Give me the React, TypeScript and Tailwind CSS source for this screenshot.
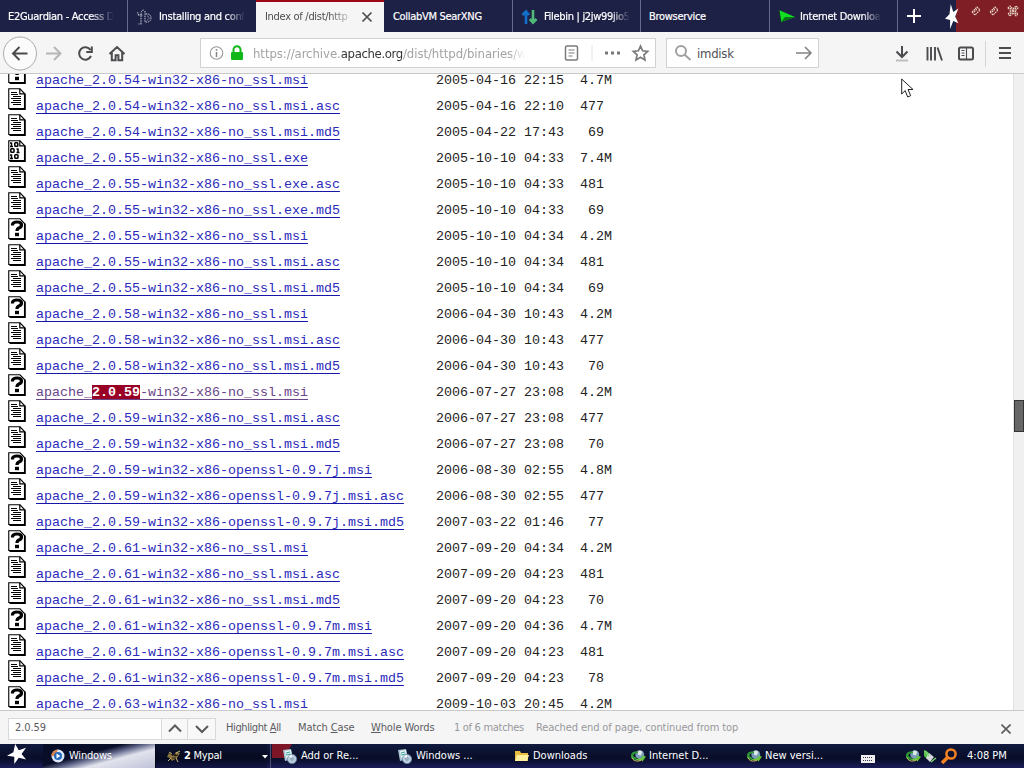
import type { ReactNode } from "react";

type Kind = "text" | "binary" | "unknown";

const FILES: { kind: Kind; name: string; date: string; size: string }[] = [
  { kind: "unknown", name: "apache_2.0.54-win32-x86-no_ssl.msi", date: "2005-04-16 22:15", size: "4.7M" },
  { kind: "text", name: "apache_2.0.54-win32-x86-no_ssl.msi.asc", date: "2005-04-16 22:10", size: "477" },
  { kind: "text", name: "apache_2.0.54-win32-x86-no_ssl.msi.md5", date: "2005-04-22 17:43", size: " 69" },
  { kind: "binary", name: "apache_2.0.55-win32-x86-no_ssl.exe", date: "2005-10-10 04:33", size: "7.4M" },
  { kind: "text", name: "apache_2.0.55-win32-x86-no_ssl.exe.asc", date: "2005-10-10 04:33", size: "481" },
  { kind: "text", name: "apache_2.0.55-win32-x86-no_ssl.exe.md5", date: "2005-10-10 04:33", size: " 69" },
  { kind: "unknown", name: "apache_2.0.55-win32-x86-no_ssl.msi", date: "2005-10-10 04:34", size: "4.2M" },
  { kind: "text", name: "apache_2.0.55-win32-x86-no_ssl.msi.asc", date: "2005-10-10 04:34", size: "481" },
  { kind: "text", name: "apache_2.0.55-win32-x86-no_ssl.msi.md5", date: "2005-10-10 04:34", size: " 69" },
  { kind: "unknown", name: "apache_2.0.58-win32-x86-no_ssl.msi", date: "2006-04-30 10:43", size: "4.2M" },
  { kind: "text", name: "apache_2.0.58-win32-x86-no_ssl.msi.asc", date: "2006-04-30 10:43", size: "477" },
  { kind: "text", name: "apache_2.0.58-win32-x86-no_ssl.msi.md5", date: "2006-04-30 10:43", size: " 70" },
  { kind: "unknown", name: "apache_2.0.59-win32-x86-no_ssl.msi", date: "2006-07-27 23:08", size: "4.2M" },
  { kind: "text", name: "apache_2.0.59-win32-x86-no_ssl.msi.asc", date: "2006-07-27 23:08", size: "477" },
  { kind: "text", name: "apache_2.0.59-win32-x86-no_ssl.msi.md5", date: "2006-07-27 23:08", size: " 70" },
  { kind: "unknown", name: "apache_2.0.59-win32-x86-openssl-0.9.7j.msi", date: "2006-08-30 02:55", size: "4.8M" },
  { kind: "text", name: "apache_2.0.59-win32-x86-openssl-0.9.7j.msi.asc", date: "2006-08-30 02:55", size: "477" },
  { kind: "text", name: "apache_2.0.59-win32-x86-openssl-0.9.7j.msi.md5", date: "2007-03-22 01:46", size: " 77" },
  { kind: "unknown", name: "apache_2.0.61-win32-x86-no_ssl.msi", date: "2007-09-20 04:34", size: "4.2M" },
  { kind: "text", name: "apache_2.0.61-win32-x86-no_ssl.msi.asc", date: "2007-09-20 04:23", size: "481" },
  { kind: "text", name: "apache_2.0.61-win32-x86-no_ssl.msi.md5", date: "2007-09-20 04:23", size: " 70" },
  { kind: "unknown", name: "apache_2.0.61-win32-x86-openssl-0.9.7m.msi", date: "2007-09-20 04:36", size: "4.7M" },
  { kind: "text", name: "apache_2.0.61-win32-x86-openssl-0.9.7m.msi.asc", date: "2007-09-20 04:23", size: "481" },
  { kind: "text", name: "apache_2.0.61-win32-x86-openssl-0.9.7m.msi.md5", date: "2007-09-20 04:23", size: " 78" },
  { kind: "unknown", name: "apache_2.0.63-win32-x86-no_ssl.msi", date: "2009-10-03 20:45", size: "4.2M" },
];

// index of the row that holds the current find match
const MATCH_ROW = 12;

function FileIcon({ kind }: { kind: Kind }) {
  return (
    <svg width="18" height="22" viewBox="0 0 18 22" className="shrink-0">
      <path d="M.75 .75H12L16.5 5.5V20.5H.75Z" fill="#fff" stroke="#000" strokeWidth="1.1" />
      <path d="M17 5.5V21.2H1.5" fill="none" stroke="#000" strokeWidth="1.6" />
      {kind !== "unknown" && <path d="M11.8 .8V5.8H16.5" fill="none" stroke="#000" strokeWidth="1.2" />}
      {kind === "text" && (
        <path
          d="M3 4.5h6M3 6.5h7M5 8.5h8M3 10.5h10M5 12.5h8M3 14.5h10M5 16.5h8"
          stroke="#000"
          shapeRendering="crispEdges"
        />
      )}
      {kind === "binary" && (
        <g fill="none" stroke="#000" strokeWidth="1.5">
          <path d="M3.5 2.500v4M2 3H3.500M2 6.500h3M10 8.500v4M8.500 9H10M8.500 12.500h3M3.500 14.500v4M2 15H3.500M2 18.500h3" />
          <rect x="6.800" y="2.800" width="3" height="3.500" rx=".8" />
          <rect x="2.800" y="8.800" width="3.200" height="3.500" rx=".8" />
          <rect x="6.800" y="14.800" width="3.200" height="3.500" rx=".8" />
        </g>
      )}
      {kind === "unknown" && (
        <>
          <path d="M4.500 7.500V6.300Q5 4 9 4Q13.500 4 13.500 7Q13.500 9 11 10Q9 10.800 9 13" fill="none" stroke="#000" strokeWidth="3.200" />
          <path d="M7 14.800h4v3.400H7z" />
        </>
      )}
    </svg>
  );
}

function Tab({ title, icon, fade, className }: { title: string; icon?: ReactNode; fade?: boolean; className: string }) {
  return (
    <div className={`flex h-8 shrink-0 items-center border-r border-[#656a88] pt-0.5 text-white ${className}`}>
      {icon}
      <span className={fade ? "whitespace-nowrap [mask-image:linear-gradient(to_right,#000_78%,transparent)]" : "whitespace-nowrap"}>
        {title}
      </span>
    </div>
  );
}

function Star({ className }: { className: string }) {
  return (
    <svg viewBox="0 0 22 22" preserveAspectRatio="none" className={className} fill="#fff">
      <path d="M9 0L13 7L21 4L16 11L21 17L13 15L8 22L8 14L0 13L7 9Z" />
    </svg>
  );
}

function IdmIcon() {
  return (
    <svg width="16" height="15" viewBox="0 0 18 16" className="shrink-0">
      <circle cx="11" cy="6" r="5" fill="#7b9bbd" />
      <path d="M9 2q3-2 5 1l-2 4-3-1z" fill="#dce9e2" />
      <path d="M9 2Q1 2 1 7q0 5 7 5l-1-3q-4-1-3-3 1-2 5-2z" fill="#2d9736" />
      <path d="M7 11l7-2-1-2 5 1-4 6-1-2q-3 1-6 0z" fill="#65c33c" />
      <path d="M2 9q2 5 8 4l3-1" fill="none" stroke="#e6d869" />
    </svg>
  );
}

function InstallerIcon() {
  return (
    <svg width="16" height="16" viewBox="0 0 16 16" className="shrink-0">
      <path d="M1 2l8-1 2 10-8 2z" fill="#a8c5d1" />
      <path d="M3 3l6-1 1 7-6 1z" fill="#e7f2f4" />
      <path d="M4 5l4-1M4 7l5-1" stroke="#3ca49b" />
      <circle cx="10" cy="11" r="4.6" fill="#b9ccdd" stroke="#7291ae" strokeWidth=".7" />
      <path d="M10 11l-3-3 3-1z" fill="#fff" />
      <circle cx="10" cy="11" r="1.2" fill="#fff" stroke="#6886a0" />
    </svg>
  );
}

function TabStrip() {
  return (
    <div className="flex h-8 bg-[#1d2146] text-[11px] tracking-[-0.3px] [-webkit-text-stroke:0.2px]">
      <Tab title="E2Guardian - Access D" fade className="w-32 pl-2" />
      <Tab
        title="Installing and conf"
        fade
        className="w-32 gap-1.5 border-r-0 pl-2"
        icon={
          <svg width="17" height="18" viewBox="0 0 17 18" className="shrink-0" fill="none" stroke="#c9cad5" strokeDasharray="1.5 .8">
            <path d="M5 16V6q0-4 3-4M2 7h5M2 4q-1 2 1 3" />
            <path d="M9 3v11h3q3-1 3-4t-3-4H9" />
            <path d="M11 8q2 0 2 2t-2 2M2 16h4" stroke="#8e91a8" />
          </svg>
        }
      />
      <div className="flex h-8 w-32 shrink-0 items-center border-t-2 border-[#9d0716] bg-[#f5f5f6] pl-[9px] text-[#4d4d50] [-webkit-text-stroke:0px]">
        <span className="w-[91px] whitespace-nowrap [mask-image:linear-gradient(to_right,#000_70%,transparent)]">Index of /dist/http</span>
        <svg width="22" height="12" viewBox="0 0 22 12" stroke="#4e4e50" strokeWidth="1.7">
          <path d="M6.5 1.5l9 9m0-9l-9 9" />
        </svg>
      </div>
      <Tab title="CollabVM SearXNG" className="w-[129px] pl-[9px]" />
      <Tab
        title="Filebin | j2jw99jio5"
        fade
        className="w-32 gap-1.5 pl-2"
        icon={
          <svg width="17" height="16" viewBox="0 0 17 16" className="shrink-0" fill="none" strokeWidth="2.6">
            <path d="M5 15V3M1.5 6L5 2.5L8 6" stroke="#126fca" />
            <path d="M12 1v12M8.800 10L12 13.500L15.500 10" stroke="#50b878" />
          </svg>
        }
      />
      <Tab title="Browservice" className="w-[129px] pl-2" />
      <Tab
        title="Internet Downloa"
        fade
        className="w-32 gap-1 pl-2"
        icon={
          <svg width="18" height="16" viewBox="0 0 18 16" className="shrink-0">
            <path d="M1 1L17 8L3 13Z" fill="#12df21" />
            <path d="M3 13L17 8L7 8Z" fill="#086f16" />
            <path d="M1 1l2 13" stroke="#153725" />
          </svg>
        }
      />
      <div className="flex flex-1 items-center bg-linear-to-r from-[#1d2146] from-44% to-[#801e25] to-44% pl-[9px]">
        <svg width="14" height="14" viewBox="0 0 14 14" stroke="#fff" strokeWidth="2" className="shrink-0">
          <path d="M7 0v14M0 7h14" />
        </svg>
        <Star className="ml-6 h-[25px] w-[14px] shrink-0" />
        <svg width="60" height="14" viewBox="0 0 60 14" className="mb-2.5 ml-2.5 shrink-0" fill="none" stroke="#e8d9ca" strokeWidth="1.1" strokeDasharray="1.6 .7">
          <path d="M3 8l5-5 3 3-5 5zM5 8l3-3M21 8l5-5 3 3-5 5zM23 8l3-3" />
          <path d="M39 4l2-2 3 3 3-3 2 2-3 3 3 3-2 2-3-3-3 3-2-2 3-3zM41 4l6 6m0-6l-6 6" />
        </svg>
      </div>
    </div>
  );
}

function Toolbar() {
  return (
    <div className="flex h-[42px] items-center border-b border-[#c9c9cc] bg-[#f5f5f6]">
      <svg width="130" height="40" viewBox="0 0 130 40" className="mr-[70px] shrink-0" fill="none" stroke="#4c4c4f" strokeWidth="2">
        <circle cx="20" cy="20.5" r="16.5" fill="#fbfbfb" stroke="#aaaaae" strokeWidth="1" />
        <path d="M27.500 20.500H13.500M19.500 14L13 20.500l6.500 6.500" />
        <path d="M46 20.500h14M54 14l6.500 6.500-6.500 6.500" stroke="#b6b6b8" />
        <path d="M90.500 17A6.200 6.200 0 1 0 91 23M91.800 13.500v5.500h-5.500" />
        <path d="M109.500 21l7.500-7 7.500 7M111.800 19.500v7.800h3.800v-5h2.800v5h3.800V19.500" />
      </svg>
      <div className="flex h-[30px] w-[456px] shrink-0 items-center border border-[#d2d2d5] bg-white">
        <svg width="44" height="28" viewBox="0 0 44 28" className="shrink-0">
          <circle cx="15.500" cy="14" r="6.300" fill="none" stroke="#96969a" strokeWidth="1.100" />
          <path d="M15.500 13v5M15.500 10v1.700" stroke="#858589" strokeWidth="1.500" />
          <rect x="30" y="13" width="12" height="8" rx="1" fill="#11b719" />
          <path d="M32.500 14v-3.300a3.500 3.500 0 0 1 7 0V14" fill="none" stroke="#11b719" strokeWidth="2" />
        </svg>
        <span className="mt-0.5 ml-2 w-[272px] text-[13px] tracking-[-0.05px] whitespace-nowrap text-[#a3a3a6] [mask-image:linear-gradient(to_right,#000_94%,transparent)]">
          https://archive.<span className="tracking-[-0.35px] text-[#353538]">apache.org</span>/dist/httpd/binaries/w
        </span>
        <svg width="125" height="28" viewBox="0 0 125 28" className="ml-auto shrink-0" fill="none" stroke="#7b7b7e">
          <rect x="35.500" y="7" width="12" height="14" rx="1.500" strokeWidth="1.500" />
          <path d="M38.500 11h6M38.500 14h6M38.500 17h4" strokeWidth="1.100" />
          <path d="M62 6v16" stroke="#e2e2e4" />
          <path d="M75 14h3M81 14h3M87 14h3" stroke="#77777a" strokeWidth="3" />
          <path d="M110.500 7l2.100 4.800 5.100.500-3.800 3.500 1.100 5.100-4.500-2.700-4.500 2.700 1.100-5.100-3.800-3.500 5.100-.500z" strokeWidth="1.700" />
        </svg>
      </div>
      <div className="ml-[10px] flex h-[30px] w-[153px] shrink-0 items-center border border-[#d2d2d5] bg-white text-[13px] tracking-[-0.25px] text-[#505054]">
        <svg width="30" height="28" viewBox="0 0 30 28" fill="none" stroke="#a0a0a2" strokeWidth="2">
          <circle cx="14" cy="12" r="5" />
          <path d="M17.500 15.500l6 5.500" />
        </svg>
        <span className="mt-0.5">imdisk</span>
        <svg width="22" height="28" viewBox="0 0 22 28" className="ml-auto" fill="none" stroke="#828285" strokeWidth="1.600">
          <path d="M0 14h15M9 8l6 6-6 6" />
        </svg>
      </div>
      <svg width="128" height="40" viewBox="0 0 128 40" className="ml-auto" fill="none" stroke="#4c4c4f" strokeWidth="2">
        <path d="M6 13v11M.500 18.500L6 24l5.500-5.500" />
        <path d="M0 27.500h12" stroke="#bebec0" />
        <path d="M31.500 14v13.500M35 14v13.500M39 14v13.500M41.500 14.500l4.500 13" strokeWidth="1.900" />
        <rect x="63" y="14.500" width="14" height="12" rx="1.500" />
        <path d="M70.500 14.500v12M65.500 17.500h3M65.500 20h3M65.500 22.500h3" strokeWidth="1.100" />
        <path d="M89.500 8v26" stroke="#d5d5d8" strokeWidth="1" />
        <path d="M103 15h12M103 20h12M103 25h12" />
      </svg>
    </div>
  );
}

function Listing() {
  return (
    <main className="flex h-[636px] overflow-hidden bg-white">
      <div className="-mt-3 flex-1">
        {FILES.map((f, i) => (
          <div
            key={f.name}
            className="flex h-[26px] pl-2 font-['Liberation_Mono','Courier_New',monospace] text-[13.333px] leading-4 text-[#222]"
          >
            <FileIcon kind={f.kind} />
            <pre className="mt-[11px] ml-2.5 w-[400px] font-[inherit]">
              {i === MATCH_ROW ? (
                <a className="text-[#6a4589] underline underline-offset-3 [text-decoration-skip-ink:none]">
                  apache_<mark className="bg-[#980025] font-bold text-white">2.0.59</mark>-win32-x86-no_ssl.msi
                </a>
              ) : (
                <a className="text-[#2a2abb] underline decoration-[#1717a8] underline-offset-3 [text-decoration-skip-ink:none]">{f.name}</a>
              )}
            </pre>
            <pre className="mt-[11px] font-[inherit]">{`${f.date}  ${f.size}`}</pre>
          </div>
        ))}
      </div>
      <div className="w-[11px] border-l border-[#e2e2e2] bg-[#f0f0f0] pt-[326px]">
        <div className="h-8 border border-[#333] bg-[#666]" />
      </div>
    </main>
  );
}

function FindBar() {
  return (
    <div className="flex h-[34px] items-center border-t border-[#c9c9cc] bg-[#f5f5f6] pt-0.5 text-[11px] tracking-[-0.1px] whitespace-nowrap text-[#5c5c60]">
      <div className="ml-2 flex h-[22px] w-[208px] shrink-0 items-center border border-[#d9d9dc] bg-white">
        <span className="w-[152px] pl-1.5">2.0.59</span>
        <svg width="54" height="20" viewBox="0 0 54 20" fill="none" stroke="#5b5b5e" strokeWidth="2">
          <path d="M0 0h54v20H0z" fill="#f8f8f8" stroke="none" />
          <path d="M.500 0v20M26.500 0v20" stroke="#d9d9dc" strokeWidth="1" />
          <path d="M8 12.500l6-6 6 6M35 7l6 6 6-6" />
        </svg>
      </div>
      <span className="ml-2.5 w-[72px] tracking-[-0.4px]">Highlight <u>A</u>ll</span>
      <span className="w-[73px]">Match <u>C</u>ase</span>
      <span className="w-[83px]"><u>W</u>hole Words</span>
      <span className="w-[82px] tracking-[-0.3px] text-[#98989b]">1 of 6 matches</span>
      <span className="text-[#98989b]">Reached end of page, continued from top</span>
      <svg width="10" height="10" viewBox="0 0 10 10" className="mr-[13px] ml-auto" stroke="#59595c" strokeWidth="1.6">
        <path d="M.500.500l9 9m0-9l-9 9" />
      </svg>
    </div>
  );
}

function Task({ label, icon, className }: { label: ReactNode; icon: ReactNode; className: string }) {
  return (
    <div className={`flex h-full shrink-0 items-center gap-[3px] whitespace-nowrap ${className}`}>
      {icon}
      <span>{label}</span>
    </div>
  );
}

function Taskbar() {
  return (
    <div className="flex h-6 items-center bg-linear-to-b from-[#111a3e] via-[#080d28] via-60% to-[#1a1d59] text-[11px] text-white">
      <Star className="mb-1 ml-[7px] h-5 w-5 shrink-0" />
      <div className="ml-4 flex h-full w-[112px] shrink-0 items-center gap-1 bg-[linear-gradient(165deg,#080d28_40%,#5e6588_51%,#e2e3ed_65%,#bfc2d8_100%)] pl-2">
        <svg width="14" height="14" viewBox="0 0 14 14" className="shrink-0">
          <circle cx="7" cy="7" r="6.500" fill="#dce9fa" />
          <path d="M7 .500a6.500 6.500 0 0 0-6.500 6.500H4z" fill="#e28143" />
          <circle cx="7" cy="7" r="4" fill="#2269bd" />
          <path d="M5.500 4.500l4 2.500-4 2.500z" fill="#fff" />
        </svg>
        <span className="tracking-[-0.2px]">Windows</span>
      </div>
      <Task
        label={<><b>2</b> Mypal</>}
        className="w-[112px] border-l border-[#050716] bg-black/20 pl-[11px] tracking-[-0.25px]"
        icon={
          <svg width="14" height="14" viewBox="0 0 14 14">
            <path d="M2 4l4 3 3-4 4 1-3 5-5 3-2-3-3-1z" fill="#8c753f" />
            <path d="M2 3l3 2M9 4l4-2M4 9l-3 3M9 9l2 4" stroke="#d4bd75" />
            <path d="M6 5l2 2 3-1M5 9h4" stroke="#201b15" />
          </svg>
        }
      />
      <svg width="30" height="24" viewBox="0 0 30 24" className="-mr-[15px] ml-[-5px] shrink-0">
        <path d="M10 0h20l-8 14H10z" fill="#7c1627" />
        <path d="M8.500 0v24" stroke="#4b4f70" />
        <path d="M0 11h6l-3 3.500z" fill="#fff" />
      </svg>
      <Task label="Add or Re..." className="ml-[5px] w-[115px]" icon={<InstallerIcon />} />
      <Task label="Windows ..." className="w-[117px]" icon={<InstallerIcon />} />
      <Task
        label="Downloads"
        className="w-[116px]"
        icon={
          <svg width="16" height="14" viewBox="0 0 16 14">
            <path d="M1 2h5l1 2h7v8H1z" fill="#e8bc41" />
            <path d="M3 6h12l-2 6H1z" fill="#ffef9c" />
          </svg>
        }
      />
      <Task label="Internet D..." className="w-[116px]" icon={<IdmIcon />} />
      <Task label="New versi..." className="w-[115px]" icon={<IdmIcon />} />
      <svg width="14" height="8" viewBox="0 0 14 8" className="mt-1.5 shrink-0">
        <path d="M0 0h14v8H0z" fill="#eee" />
        <path d="M2 2.500h10M2 5.500h10" stroke="#34374f" strokeDasharray="1 1" />
      </svg>
      <div className="ml-auto flex w-[119px] shrink-0 items-center">
        <IdmIcon />
        <svg width="14" height="16" viewBox="0 0 14 16" className="ml-0.5">
          <path d="M1 2l4 2 2 3-3 4-3-3z" fill="#51bd4a" />
          <path d="M6 5l5 4-4 5-4-4z" fill="#d5d9db" />
          <path d="M8 14l5-4M2 3l4 5" stroke="#81d575" strokeWidth="1.500" />
        </svg>
        <svg width="17" height="16" viewBox="0 0 17 16" className="ml-1" fill="none" stroke="#f58222">
          <circle cx="10" cy="6" r="4.600" strokeWidth="2.500" />
          <path d="M6.500 9.500L1 15" strokeWidth="3.500" />
        </svg>
        <span className="ml-[9px] whitespace-nowrap">4:08 PM</span>
      </div>
    </div>
  );
}

export default function App() {
  return (
    <div className="relative h-[768px] w-[1024px] overflow-hidden font-['Tahoma','DejaVu_Sans_Condensed','DejaVu_Sans',sans-serif]">
      <TabStrip />
      <Toolbar />
      <Listing />
      <FindBar />
      <Taskbar />
      <svg width="14" height="21" viewBox="0 0 14 21" className="absolute top-[78px] left-[901px]">
        <path d="M.700 1v15l3.500-3.400L6.700 19l3-1.300L7 11.500h5z" fill="#fff" stroke="#222" />
      </svg>
    </div>
  );
}
